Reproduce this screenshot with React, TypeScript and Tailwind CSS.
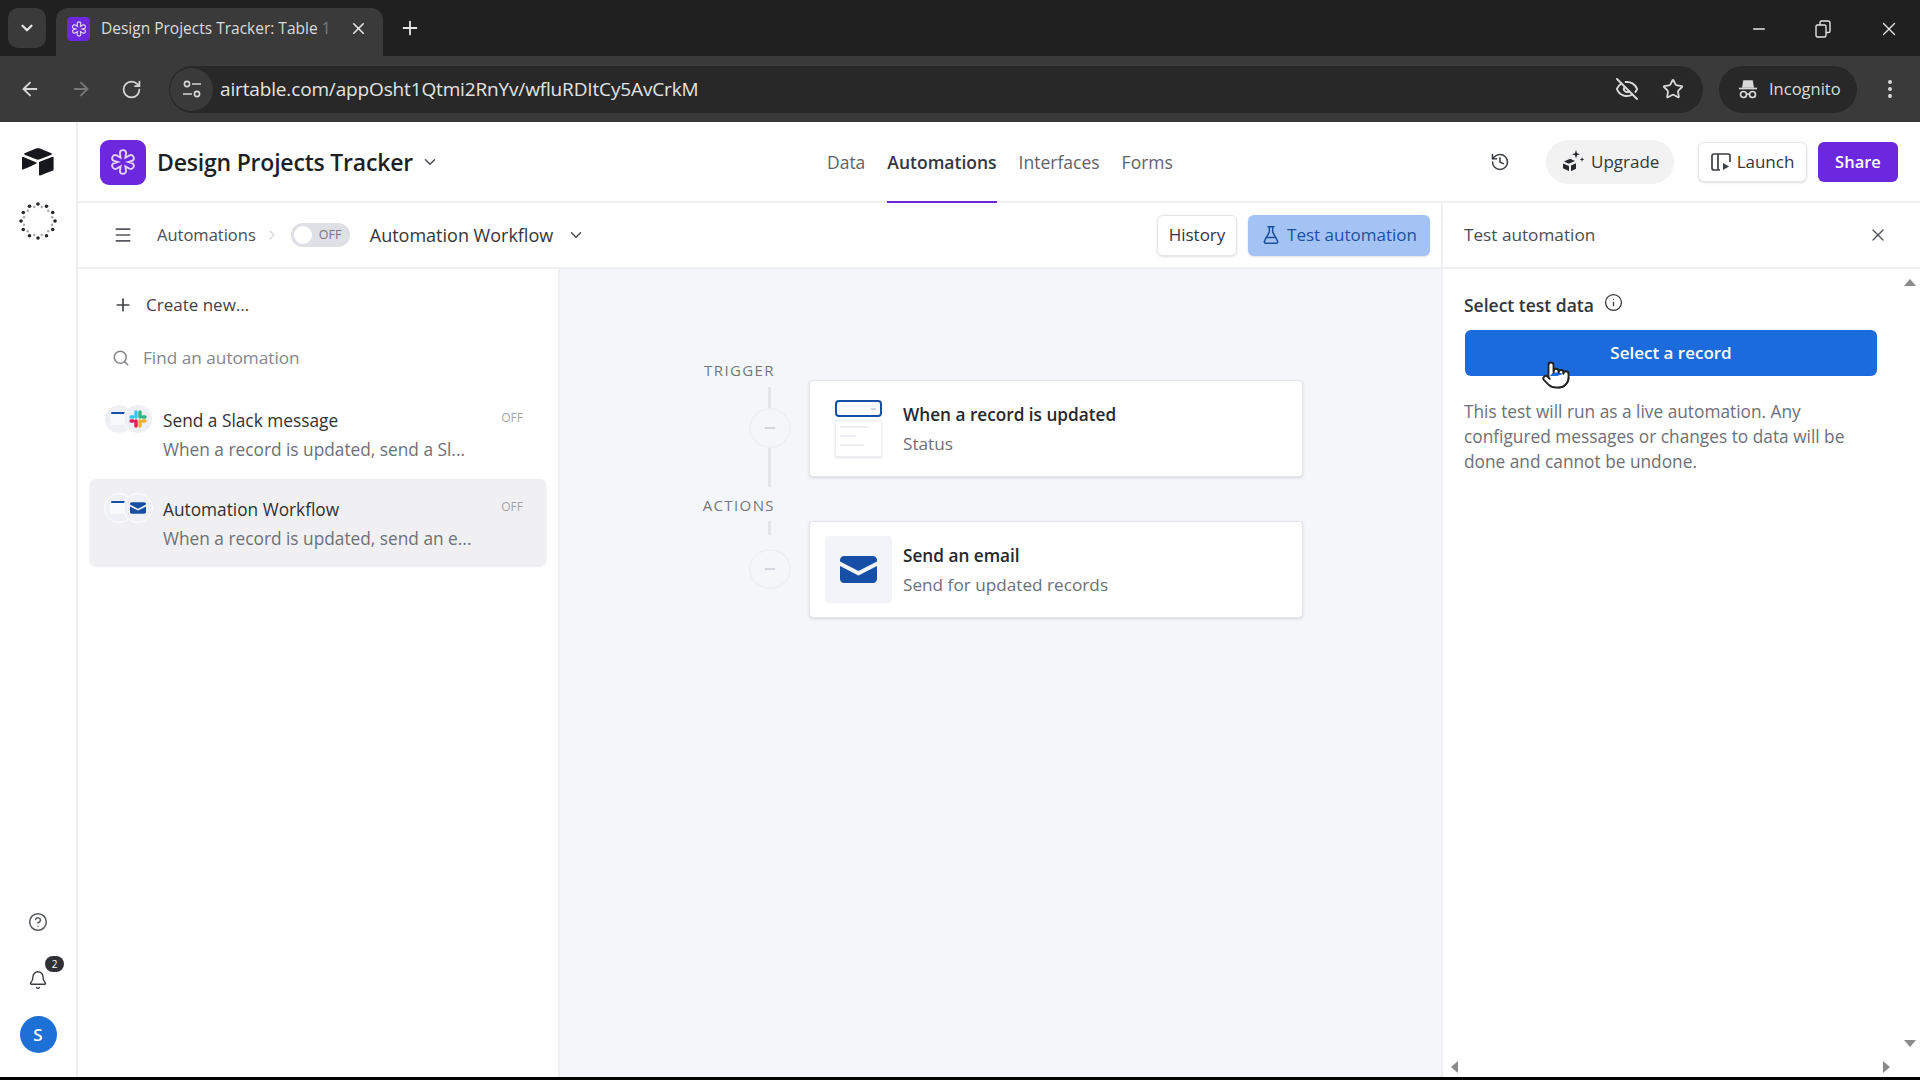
import { ArrowLeft, ArrowRight, Bell, ChevronDown, ChevronRight, CircleHelp, EllipsisVertical, EyeOff, FlaskConical, History, Info, Menu, Minus, Plus, Pointer, RotateCw, Search, Star, X } from 'lucide-react'

const FlowerIcon = ({ size }: { size: number }) => (
  <svg width={size} height={size} viewBox="0 0 24 24" fill="none" stroke="currentColor" strokeWidth="1.500">
    <path d="M9.500 5a2.500 2.500 0 0 1 5 0l-.6 3.600 3.200-1.900a2.500 2.500 0 0 1 2.500 4.300L16.200 12l3.400 1a2.500 2.500 0 0 1-2.500 4.300l-3.200-1.900.6 3.600a2.500 2.500 0 0 1-5 0l.6-3.600-3.200 1.900A2.500 2.500 0 0 1 4.400 13l3.400-1-3.400-1a2.500 2.500 0 0 1 2.500-4.300l3.200 1.900z" />
  </svg>
)

const AirtableLogo = () => (
  <svg width="32" height="28" viewBox="0 0 32 28" fill="#16181d">
    <path d="M14 .6 2.600 5.300c-.6.300-.6 1.100 0 1.400l11.500 4.600c1.200.5 2.600.5 3.800 0l11.500-4.600c.6-.3.6-1.100 0-1.400L18 .6c-1.300-.5-2.700-.5-4 0z" />
    <path d="M17 14.600v12.200c0 .6.600 1 1.100.8l12.900-5c.3-.1.600-.4.600-.8V9.600c0-.6-.6-1-1.100-.8l-12.900 5c-.4.200-.6.500-.6.800z" />
    <path d="M0.900 8.700 14.400 14.400c.5.200.5.800 0 1L6 19.400.9 21.600c-.4.200-.9-.1-.9-.6V9.300c0-.5.500-.8.900-.6z" />
  </svg>
)

const Spinner = () => {
  const dots = Array.from({ length: 24 }, (_, i) => (i * 15 * Math.PI) / 180)
  return (
    <svg width="38" height="38" viewBox="0 0 38 38">
      {dots.map((a, i) => (
        <circle
          key={i}
          cx={19 + (i % 2 ? 14.5 : 17) * Math.cos(a)}
          cy={19 + (i % 2 ? 14.5 : 17) * Math.sin(a)}
          r={i % 2 ? 1.2 : 1.8}
          fill={i % 2 ? '#a8a8ac' : '#26282d'}
        />
      ))}
    </svg>
  )
}

const TuneIcon = () => (
  <svg width="22" height="22" viewBox="0 0 22 22" fill="none" stroke="#d6d6d6" strokeWidth="1.600">
    <circle cx="6" cy="6" r="2.600" />
    <path d="M11 6h9M2 16h9" />
    <circle cx="16" cy="16" r="2.600" />
  </svg>
)

const IncognitoIcon = () => (
  <svg width="22" height="22" viewBox="0 0 22 22" fill="none" stroke="#d8d8d8" strokeWidth="1.700">
    <path d="M6 9l1-6h8l1 6z" fill="#d8d8d8" />
    <path d="M2 10.500h18" />
    <circle cx="6.500" cy="16.500" r="3" />
    <circle cx="15.500" cy="16.500" r="3" />
    <path d="M9.500 16h3" />
  </svg>
)

const RestoreIcon = () => (
  <svg width="16" height="18" viewBox="0 0 16 18" fill="none" stroke="#e4e4e4" strokeWidth="1.400">
    <rect x="1" y="5" width="10" height="12" rx="1.500" />
    <path d="M5 5V2.500C5 1.700 5.700 1 6.500 1H13c1 0 2 1 2 2v8c0 .8-.7 1.500-1.500 1.500H11" />
  </svg>
)

const SparkleIcon = () => (
  <svg width="22" height="24" viewBox="0 0 22 24" fill="#26282d">
    <path d="M13 0l1 3.200 3 1-3 1L13 8.500l-1-3.300-3-1 3-1z" />
    <path d="M19 7l.6 1.800 1.800.6-1.800.6L19 12l-.6-2-1.800-.6 1.800-.6z" />
    <path d="M1 11.500 6 9.200c.7-.3 1.500-.3 2.200 0l3.800 1.700-5.200 2.400c-.7.300-1.500.3-2.200 0z" />
    <path d="M8 15.500l5-2.300v5.500l-4.600 2.300c-.2.100-.4 0-.4-.3z" />
    <path d="M0 13.500l6 2.600v5L.4 18.500c-.2-.1-.4-.4-.4-.6z" />
  </svg>
)

const LaunchIcon = () => (
  <svg width="20" height="20" viewBox="0 0 20 20" fill="none" stroke="#3b3e45" strokeWidth="1.700">
    <path d="M9 18H3c-1 0-2-1-2-2V4c0-1 1-2 2-2h14c1 0 2 1 2 2v6" />
    <path d="M7 2v16" />
    <path d="M12 11l6 3.500-6 3.500z" fill="#3b3e45" stroke="none" />
  </svg>
)

const EnvelopeIcon = ({ w, h }: { w: number; h: number }) => (
  <svg width={w} height={h} viewBox="0 0 37 27">
    <path d="M4 0h29c2.200 0 4 1.800 4 4v1.500L18.500 15 0 5.500V4c0-2.200 1.800-4 4-4z" fill="#174ea6" />
    <path d="M0 10l18.500 9.500L37 10v13c0 2.200-1.800 4-4 4H4c-2.200 0-4-1.800-4-4z" fill="#174ea6" />
  </svg>
)

const SlackIcon = () => (
  <svg width="18" height="18" viewBox="0 0 18 18" strokeWidth="3.400" strokeLinecap="round">
    <path d="M7 2v5" stroke="#36c5f0" />
    <path d="M2 7h2" stroke="#36c5f0" />
    <path d="M11 2v5M16 7h-2" stroke="#2eb67d" />
    <path d="M11 11v5M14 11h2" stroke="#ecb22e" />
    <path d="M7 11v5M2 11h2" stroke="#e01e5a" />
  </svg>
)

const RecordIcon = () => (
  <div className="flex flex-col gap-[3px] w-[47px]">
    <div className="h-[17px] rounded-[4px] border-2 border-[#174ea6] bg-white flex items-center justify-end pr-1">
      <div className="h-[2px] w-[5px] bg-[#d5d8e2]" />
    </div>
    <div className="h-[37px] rounded-[2px] border border-[#eceef3] bg-white px-1 py-[5px] flex flex-col gap-[7px] shadow-sm">
      <div className="h-[2px] w-[28px] bg-[#eceef3]" />
      <div className="h-[2px] w-[16px] bg-[#eceef3]" />
      <div className="h-[2px] w-[24px] bg-[#eceef3]" />
    </div>
  </div>
)

const MiniPair = ({ children }: { children: React.ReactNode }) => (
  <div className="flex w-[56px] shrink-0">
    <div className="w-[30px] h-[30px] rounded-full bg-[#eef0f6] border border-white shrink-0 flex flex-col items-center pt-[7px]">
      <div className="w-[16px] h-[2px] rounded-sm bg-[#174ea6]" />
      <div className="w-[18px] h-[11px] bg-[#f8f9fb]" />
    </div>
    <div className="w-[30px] h-[30px] rounded-full bg-[#eef0f6] border border-white shrink-0 -ml-[11px] flex items-center justify-center">
      {children}
    </div>
  </div>
)

const AutomationRow = ({ icon, title, sub, selected }: { icon: React.ReactNode; title: string; sub: string; selected?: boolean }) => (
  <div className={`mx-[12px] h-[86px] rounded-[6px] pl-[14px] pr-[23px] flex ${selected ? 'bg-[#f0f0f2] shadow-sm' : ''}`}>
    <div className="pt-[14px]">{icon}</div>
    <div className="pt-[18px] pl-[3px] min-w-0 flex-1">
      <div className="text-[17.300px] leading-[26px] text-[#2f3137]">{title}</div>
      <div className="text-[17.300px] leading-[31px] text-[#6d7078] whitespace-nowrap">{sub}</div>
    </div>
    <div className="pt-[20px] text-[12px] leading-[16px] text-[#a3a5aa]">OFF</div>
  </div>
)

const Connector = ({ top, bottom, gap }: { top: string; bottom: string; gap: string }) => (
  <>
    <div className={`w-[3px] bg-[#e3e5ea] ${top}`} />
    <div className={gap} />
    <div className="w-[42px] h-[40px] rounded-full border-2 border-[#eef0f4] flex items-center justify-center text-[#c9ccd3]">
      <Minus size={16} strokeWidth={2.500} />
    </div>
    <div className={`w-[3px] bg-[#e3e5ea] ${bottom}`} />
  </>
)

const StepLabel = ({ children }: { children: string }) => (
  <div className="self-start w-[45px] flex justify-end whitespace-nowrap text-[15px] leading-[16px] tracking-[1.400px] text-[#74777f]">
    {children}
  </div>
)

const StepCard = ({ icon, title, sub }: { icon: React.ReactNode; title: string; sub: string }) => (
  <div className="w-[494px] h-[97px] bg-white rounded-[4px] border border-[#e4e6ec] shadow-[0_1px_3px_rgba(0,0,0,0.12)] flex items-center pl-[15px]">
    <div className="w-[67px] h-[67px] flex items-center justify-center shrink-0">{icon}</div>
    <div className="pl-[11px] pt-[3px]">
      <div className="text-[17.200px] leading-[28px] font-semibold text-[#26282d]">{title}</div>
      <div className="text-[17.200px] leading-[30px] text-[#6d7078]">{sub}</div>
    </div>
  </div>
)

const Triangle = ({ className, points }: { className: string; points: string }) => (
  <svg className={`absolute ${className}`} width="12" height="12" viewBox="0 0 12 12" fill="#8a8a8a">
    <polygon points={points} />
  </svg>
)

export default function App() {
  return (
    <div className="w-[1920px] h-[1080px] overflow-hidden flex flex-col bg-white font-['Open_Sans','Noto_Sans',sans-serif]">
      {/* browser tabs */}
      <div className="h-[56px] shrink-0 bg-[#202020] flex items-end text-[#e6e6e6]">
        <div className="ml-[8px] mb-[8px] w-[38px] h-[40px] rounded-[10px] bg-[#3a3a3a] flex items-center justify-center">
          <ChevronDown size={18} strokeWidth={3} />
        </div>
        <div className="ml-[10px] w-[327px] h-[48px] rounded-t-[12px] bg-[#3a3a3a] flex items-center pl-[11px] pb-[7px]">
          <div className="w-[23px] h-[24px] rounded-[4px] bg-[#6b28de] flex items-center justify-center text-[#e6d8ff]">
            <FlowerIcon size={18} />
          </div>
          <div className="ml-[11px] w-[236px] whitespace-nowrap text-[15.500px] text-[#dcdcdc]">
            Design Projects Tracker: Table <span className="text-[#7d7d7d]">1</span>
          </div>
          <X size={19} className="ml-[12px]" />
        </div>
        <Plus size={22} className="ml-[16px] mb-[17px]" />
        <div className="ml-auto mb-[16px] mr-[20px] flex items-center gap-[47px]">
          <Minus size={18} />
          <RestoreIcon />
          <X size={22} strokeWidth={1.500} />
        </div>
      </div>

      {/* browser toolbar */}
      <div className="h-[66px] shrink-0 bg-[#3a3a3a] flex items-center text-[#d8d8d8]">
        <ArrowLeft size={22} className="ml-[19px]" />
        <ArrowRight size={22} className="ml-[29px] text-[#77787a]" />
        <RotateCw size={21} className="ml-[29px]" />
        <div className="ml-[27px] w-[1534px] h-[47px] rounded-full bg-[#282828] flex items-center">
          <div className="ml-[1px] w-[43px] h-[43px] rounded-full bg-[#3a3a3a] flex items-center justify-center">
            <TuneIcon />
          </div>
          <div className="ml-[7px] text-[19px] text-[#e4e4e4] tracking-[-0.150px]">airtable.com/appOsht1Qtmi2RnYv/wfluRDItCy5AvCrkM</div>
          <EyeOff size={24} className="ml-auto" />
          <Star size={22} className="ml-[23px] mr-[19px]" />
        </div>
        <div className="ml-[16px] w-[138px] h-[47px] rounded-full bg-[#282828] flex items-center pl-[18px]">
          <IncognitoIcon />
          <span className="ml-[10px] text-[16.500px] text-[#dcdcdc]">Incognito</span>
        </div>
        <EllipsisVertical size={24} className="ml-[21px]" />
      </div>

      <div className="flex-1 min-h-0 flex">
        {/* rail */}
        <div className="w-[78px] shrink-0 border-r-2 border-[#eceef1] flex flex-col items-center pt-[26px] pb-[24px]">
          <AirtableLogo />
          <div className="mt-[26px]"><Spinner /></div>
          <CircleHelp size={20} strokeWidth={1.800} className="mt-auto text-[#55585f]" />
          <div className="relative mt-[38px]">
            <Bell size={20} strokeWidth={1.700} className="text-[#3a3d44]" />
            <div className="absolute -top-[14px] left-[17px] w-[19px] h-[16px] rounded-full bg-[#2f3137] text-white text-[10px] leading-[16px] text-center">2</div>
          </div>
          <div className="mt-[26px] w-[37px] h-[37px] rounded-full bg-[#1d70d6] text-white text-[17px] font-semibold flex items-center justify-center">S</div>
        </div>

        <div className="flex-1 min-w-0 flex flex-col">
          {/* app header */}
          <div className="h-[81px] shrink-0 border-b-2 border-[#eef0f3] flex items-center pl-[22px] pr-[22px] pt-[1px]">
            <div className="w-[46px] h-[45px] rounded-[9px] bg-[#6b28de] flex items-center justify-center text-[#e6d0ff]">
              <FlowerIcon size={30} />
            </div>
            <div className="ml-[11px] text-[23px] font-semibold text-[#1d1f25] tracking-[-0.200px]">Design Projects Tracker</div>
            <ChevronDown size={18} className="ml-[8px] text-[#4a4d55]" />
            <div className="ml-[388px] h-full flex gap-[22px] text-[17.500px] text-[#5f626a]">
              <div className="flex items-center">Data</div>
              <div className="flex items-center font-semibold text-[#33363d] border-b-2 border-[#6b28de] -mb-[2px]">Automations</div>
              <div className="flex items-center">Interfaces</div>
              <div className="flex items-center">Forms</div>
            </div>
            <History size={20} strokeWidth={1.800} className="ml-auto text-[#3a3d44]" />
            <div className="ml-[36px] w-[128px] h-[44px] rounded-full bg-[#f2f2f3] flex items-center pl-[17px] gap-[6px] text-[17px] text-[#33363d]">
              <SparkleIcon />
              Upgrade
            </div>
            <div className="ml-[24px] w-[109px] h-[40px] rounded-[6px] bg-white border border-[#e4e6ec] shadow-sm flex items-center justify-center gap-[6px] text-[17px] text-[#33363d]">
              <LaunchIcon />
              Launch
            </div>
            <div className="ml-[11px] w-[80px] h-[40px] rounded-[6px] bg-[#6b28de] text-white text-[16.500px] font-semibold flex items-center justify-center">Share</div>
          </div>

          <div className="flex-1 min-h-0 flex">
            <div className="w-[1363px] shrink-0 flex flex-col">
              {/* sub header */}
              <div className="h-[66px] shrink-0 border-b-2 border-[#eef0f3] flex items-center pl-[35px] pr-[11px]">
                <Menu size={20} className="text-[#55585f]" />
                <div className="ml-[24px] text-[16.500px] text-[#4a4d55]">Automations</div>
                <ChevronRight size={16} className="ml-[8px] text-[#d5d7dc]" />
                <div className="ml-[11px] w-[59px] h-[24px] rounded-full bg-[#dfe0e6] flex items-center pl-[3px] text-[12.500px] text-[#74777f]">
                  <div className="w-[18px] h-[18px] rounded-full bg-white" />
                  <span className="ml-[7px]">OFF</span>
                </div>
                <div className="ml-[20px] text-[18px] font-medium text-[#33363d]">Automation Workflow</div>
                <ChevronDown size={18} className="ml-[14px] text-[#4a4d55]" />
                <div className="ml-auto w-[80px] h-[41px] rounded-[6px] bg-white border border-[#e4e6ec] shadow-sm flex items-center justify-center text-[17px] text-[#33363d]">History</div>
                <div className="ml-[11px] w-[182px] h-[41px] rounded-[6px] bg-[#a4c3f5] shadow-sm flex items-center justify-center gap-[6px] text-[17px] text-[#1d4f9e]">
                  <FlaskConical size={20} strokeWidth={1.800} />
                  Test automation
                </div>
              </div>

              <div className="flex-1 min-h-0 flex">
                {/* automation list */}
                <div className="w-[482px] shrink-0 border-r-2 border-[#eef0f3]">
                  <div className="h-[68px] flex items-center pl-[35px] pt-[4px] text-[17px] text-[#3f4249]">
                    <Plus size={20} />
                    <span className="ml-[13px]">Create new...</span>
                  </div>
                  <div className="h-[28px] mt-[7px] flex items-center pl-[34px] text-[17.200px] text-[#84878e]">
                    <Search size={18} />
                    <span className="ml-[13px]">Find an automation</span>
                  </div>
                  <div className="mt-[18px] flex flex-col gap-[3px]">
                    <AutomationRow icon={<MiniPair><SlackIcon /></MiniPair>} title="Send a Slack message" sub="When a record is updated, send a Sl..." />
                    <AutomationRow icon={<MiniPair><EnvelopeIcon w={16} h={12} /></MiniPair>} title="Automation Workflow" sub="When a record is updated, send an e..." selected />
                  </div>
                </div>

                {/* canvas */}
                <div className="flex-1 min-w-0 bg-[#f5f6fa] flex pl-[170px]">
                  <div className="w-[79px] shrink-0 pt-[93px] flex flex-col items-center">
                    <StepLabel>TRIGGER</StepLabel>
                    <div className="h-[9px]" />
                    <Connector top="h-[21px]" gap="h-0" bottom="h-[39px]" />
                    <div className="h-[10px]" />
                    <StepLabel>ACTIONS</StepLabel>
                    <div className="h-[8px]" />
                    <Connector top="h-[14px]" gap="h-[14px]" bottom="h-0" />
                  </div>
                  <div className="pt-[111px] flex flex-col gap-[44px]">
                    <StepCard icon={<RecordIcon />} title="When a record is updated" sub="Status" />
                    <StepCard
                      icon={<div className="w-[67px] h-[67px] -ml-[1px] rounded-[4px] bg-[#f3f4f9] flex items-center justify-center"><EnvelopeIcon w={37} h={27} /></div>}
                      title="Send an email"
                      sub="Send for updated records"
                    />
                  </div>
                </div>
              </div>
            </div>

            {/* test panel */}
            <div className="flex-1 min-w-0 relative border-l-2 border-[#eef0f3] flex flex-col">
              <div className="h-[66px] shrink-0 border-b-2 border-[#eef0f3] flex items-center pl-[21px] pr-[32px] text-[17.200px] text-[#4a4d55]">
                Test automation
                <X size={20} strokeWidth={1.500} className="ml-auto" />
              </div>
              <div className="pl-[22px] pt-[20px]">
                <div className="-ml-[1px] flex items-center h-[32px] text-[17.500px] font-semibold text-[#33363d]">
                  Select test data
                  <Info size={19} strokeWidth={1.600} className="ml-[10px] -mt-[6px]" />
                </div>
                <div className="relative mt-[9px] w-[412px] h-[46px] rounded-[6px] bg-[#1b6bdc] text-white text-[17px] font-semibold flex items-center justify-center">
                  Select a record
                  <Pointer size={30} strokeWidth={1.500} fill="white" className="absolute left-[76px] top-[30px] text-[#222]" />
                </div>
                <p className="-ml-[1px] mt-[23px] w-[412px] text-[17.300px] leading-[25px] text-[#6d7078]">
                  This test will run as a live automation. Any configured messages or changes to data will be done and cannot be undone.
                </p>
              </div>
              <Triangle className="right-[4px] top-[73px]" points="0,10 6,3 12,10" />
              <Triangle className="right-[4px] bottom-[27px]" points="0,2 12,2 6,9" />
              <Triangle className="left-[5px] bottom-[4px]" points="10,0 10,12 3,6" />
              <Triangle className="right-[27px] bottom-[4px]" points="2,0 2,12 9,6" />
            </div>
          </div>
        </div>
      </div>

      <div className="h-[3px] shrink-0 bg-black" />
    </div>
  )
}
